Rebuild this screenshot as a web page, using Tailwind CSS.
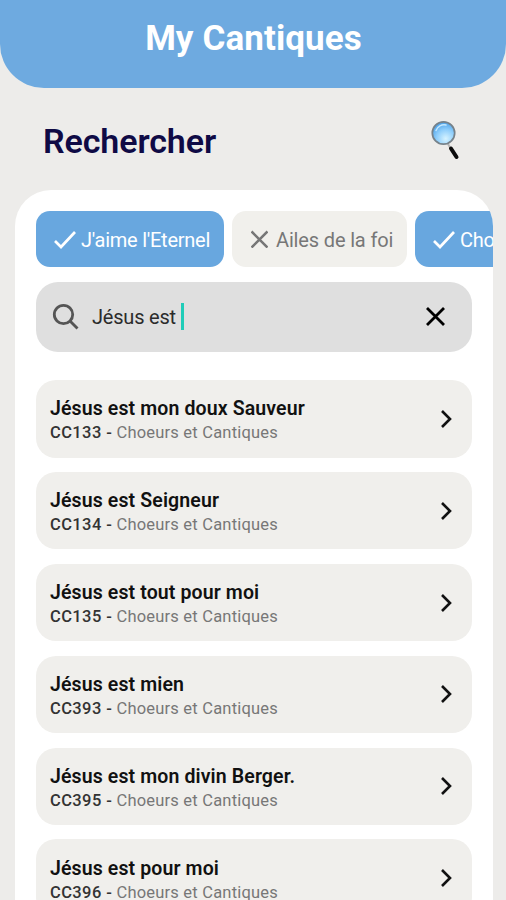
<!DOCTYPE html>
<html lang="fr">
<head>
    <meta charset="UTF-8">
    <meta name="viewport" content="width=device-width, initial-scale=1.0">
    <title>My Cantiques</title>
    <script src="https://cdn.jsdelivr.net/npm/@tailwindcss/browser@4"></script>
</head>
<body class="bg-[#edecea] h-screen overflow-hidden flex flex-col font-[Roboto,sans-serif]">

    <header class="h-[88px] shrink-0 bg-[#6eaae0] rounded-b-[44px] flex justify-center pt-[14px]">
        <h1 class="text-white font-bold text-[35px] leading-[50px] tracking-[0.100px] pl-px">My Cantiques</h1>
    </header>

    <div class="h-[102px] shrink-0 flex items-center justify-between pl-[43px] pr-[44px]">
        <h2 class="text-[#0f0a45] font-semibold text-[34px] leading-[44px] tracking-[-0.100px] pt-[3px]">Rechercher</h2>
        <svg class="w-[34px] h-[42px]" viewBox="0 0 34 42">
            <defs>
                <radialGradient id="lens" cx="0.6" cy="0.75" r="0.75">
                    <stop offset="0" stop-color="#d6f3ff"/>
                    <stop offset="0.55" stop-color="#8dcdfb"/>
                    <stop offset="1" stop-color="#4a9fe6"/>
                </radialGradient>
            </defs>
            <path d="M20 26l2 3.500" stroke="#b5b5b5" stroke-width="2"/>
            <circle cx="15.500" cy="15" r="11.200" fill="url(#lens)" stroke="#77828a" stroke-width="1.700"/>
            <path d="M8 12.500a8.500 8.500 0 0 1 10-5.500" fill="none" stroke="#c4e8ff" stroke-width="1.500" stroke-linecap="round"/>
            <path d="M23 30.500l5.500 8.500" stroke="#0c0c0c" stroke-width="4" stroke-linecap="round"/>
        </svg>
    </div>

    <main class="flex-1 min-h-0 ml-[15px] mr-[13px] bg-white rounded-t-[36px] overflow-hidden pt-[21px] pl-[21px]">
        <!-- Song books -->
        <div class="flex gap-2 h-[56px] text-[20px] whitespace-nowrap">
            <button class="w-[188px] shrink-0 bg-[#68a7df] text-white rounded-[14px] flex items-center pl-[18px] gap-[5px]">
                <svg class="w-[22px] h-[20px] mt-px shrink-0" viewBox="0 0 22 20" fill="none" stroke="currentColor" stroke-width="2.700"><path d="M1 11l6 6L21 2"/></svg>
                <span class="pt-[2px] tracking-[-0.250px]">J'aime l'Eternel</span>
            </button>
            <button class="w-[175px] shrink-0 bg-[#f1f0ec] text-[#777] rounded-[14px] flex items-center pl-[19px] gap-[8px]">
                <svg class="w-[17px] h-[18px] shrink-0" viewBox="0 0 17 18" fill="none" stroke="currentColor" stroke-width="2.600"><path d="M.5 1.500l16 16M16.500 1.500l-16 16"/></svg>
                <span class="pt-[2px] tracking-[-0.150px]">Ailes de la foi</span>
            </button>
            <button class="w-[230px] shrink-0 bg-[#68a7df] text-white rounded-[14px] flex items-center pl-[18px] gap-[5px]">
                <svg class="w-[22px] h-[20px] mt-px shrink-0" viewBox="0 0 22 20" fill="none" stroke="currentColor" stroke-width="2.700"><path d="M1 11l6 6L21 2"/></svg>
                <span class="pt-[2px] tracking-[-0.250px]">Choeurs et Cantiques</span>
            </button>
        </div>

        <!-- Search -->
        <div class="w-[436px] h-[70px] mt-[15px] bg-[#dfdfdf] rounded-[22px] flex items-center pl-[16px] pr-[27px]">
            <svg class="w-[27px] h-[27px] mb-[2px]" viewBox="0 0 27 27" fill="none" stroke="#555" stroke-width="2.800"><circle cx="11.500" cy="11.500" r="9.200"/><path d="M18 18l7.500 7.500"/></svg>
            <span class="ml-[13px] text-[20px] tracking-[-0.200px] text-[#2b2b2b]">Jésus est</span>
            <span class="ml-[5px] mb-[2px] w-[3px] h-[27px] bg-[#1fccb8]"></span>
            <svg class="ml-auto mb-px w-[19px] h-[19px]" viewBox="0 0 19 19" fill="none" stroke="#000" stroke-width="2.800"><path d="M1 1l17 17M18 1L1 18"/></svg>
        </div>

        <ul id="results" class="w-[436px] mt-[28px] flex flex-col gap-[14.400px]"></ul>
    </main>

    <script>
        const songs = [
            { number: 'CC133', title: 'Jésus est mon doux Sauveur' },
            { number: 'CC134', title: 'Jésus est Seigneur' },
            { number: 'CC135', title: 'Jésus est tout pour moi' },
            { number: 'CC393', title: 'Jésus est mien' },
            { number: 'CC395', title: 'Jésus est mon divin Berger.' },
            { number: 'CC396', title: 'Jésus est pour moi' }
        ];

        const listItems = songs.map(song => `
            <li class="h-[77.500px] shrink-0 bg-[#f0efec] rounded-[20px] flex items-center justify-between pl-[14px] pr-[20px]">
                <div class="pt-[4px]">
                    <div class="text-[19.500px] leading-[25px] font-semibold tracking-[0.120px] text-[#111]">${song.title}</div>
                    <div class="text-[16.500px] leading-[24px] tracking-[0.200px] text-[#777]"><span class="font-medium tracking-[0.400px] text-[#333]">${song.number} -</span> Choeurs et Cantiques</div>
                </div>
                <svg class="w-[11px] h-[18px]" viewBox="0 0 11 18" fill="none" stroke="#111" stroke-width="2.600"><path d="M1 1l8 8-8 8"/></svg>
            </li>`);
        document.getElementById('results').innerHTML = listItems.join('');
    </script>
</body>
</html>
